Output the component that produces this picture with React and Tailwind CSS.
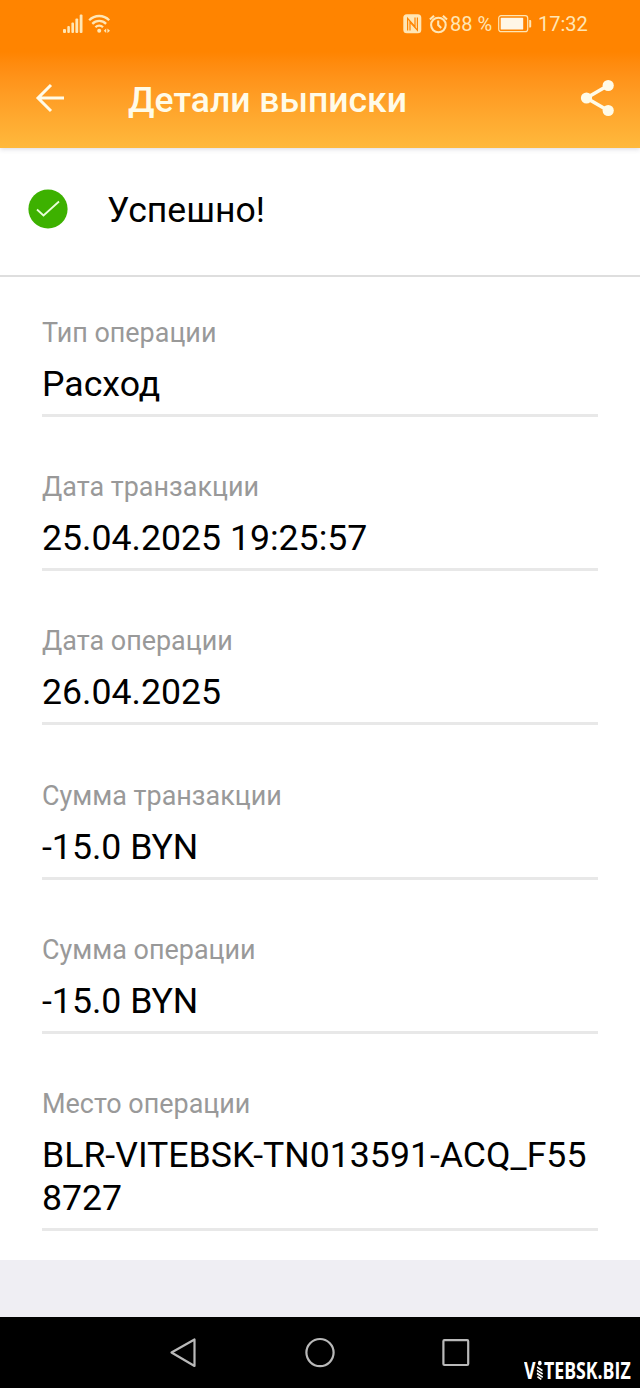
const fields = [
  { label: 'Тип операции', value: 'Расход' },
  { label: 'Дата транзакции', value: '25.04.2025 19:25:57' },
  { label: 'Дата операции', value: '26.04.2025' },
  { label: 'Сумма транзакции', value: '-15.0 BYN' },
  { label: 'Сумма операции', value: '-15.0 BYN' },
  { label: 'Место операции', value: 'BLR-VITEBSK-TN013591-ACQ_F558727' },
];

const SignalIcon = () => (
  <svg width="20" height="20" viewBox="0 0 20 20" fill="currentColor">
    <rect x="0" y="15" width="3" height="4" rx="1" />
    <rect x="4.3" y="12" width="2.6" height="7" rx="1" />
    <rect x="8.4" y="8.5" width="2.6" height="10.5" rx="1" />
    <rect x="12.4" y="4.5" width="2.8" height="14.5" rx="1" />
    <rect x="16.7" y="0.5" width="2.8" height="18.5" rx="1" />
  </svg>
);

const WifiIcon = () => (
  <svg width="24" height="20" viewBox="0 0 24 20" fill="none" stroke="currentColor" strokeWidth="2.3">
    <path d="M1.2 6.2a14 14 0 0 1 20 0" />
    <path d="M4.3 9.9a9.6 9.6 0 0 1 13.8 0" />
    <path d="M7.4 13.2a5.4 5.4 0 0 1 7.6 0" />
    <circle cx="11.2" cy="16.8" r="2" fill="currentColor" stroke="none" />
    <path d="M18.2 14.5v4.5l-2.4-2.2zM19.4 14.5v4.5l2.6-2.2z" fill="currentColor" stroke="none" />
  </svg>
);

const NfcIcon = () => (
  <svg width="19" height="20" viewBox="0 0 19 20">
    <rect x="0.3" y="0.3" width="18" height="19" rx="3.5" fill="currentColor" />
    <path d="M4.6 16.5V4.4l7.4 8.2V3.5" fill="none" stroke="#ff8400" strokeWidth="1.2" />
    <path d="M7 16.5V8.2l7.4 8V3.5" fill="none" stroke="#ff8400" strokeWidth="1.2" />
  </svg>
);

const AlarmIcon = () => (
  <svg width="19" height="20" viewBox="0 0 19 20" fill="none" stroke="currentColor" strokeWidth="2.1">
    <circle cx="9.4" cy="11" r="7.3" />
    <path d="M9.2 6.5V11l3 3" />
    <path d="M0.9 5.6L5 1.8M18 5.6l-4.1-3.8" />
  </svg>
);

const BatteryIcon = () => (
  <svg width="34" height="18" viewBox="0 0 34 18">
    <rect x="0.7" y="0.7" width="29" height="16" rx="2.5" fill="none" stroke="currentColor" strokeWidth="1.2" />
    <rect x="2.7" y="2.8" width="22.5" height="11.8" rx="0.7" fill="#fff6e6" />
    <path d="M31.2 5h1a1 1 0 0 1 1 1v5.6a1 1 0 0 1-1 1h-1z" fill="currentColor" />
  </svg>
);

const StatusBar = () => (
  <div className="flex h-12 items-center text-[#ffe6b5]">
    <div className="ml-[63px] flex gap-[5px]">
      <SignalIcon />
      <WifiIcon />
    </div>
    <div className="ml-auto mr-[52px] flex items-center">
      <NfcIcon />
      <div className="ml-[7px]"><AlarmIcon /></div>
      <span className="ml-[2px] w-[48px] whitespace-nowrap text-[20px] leading-6">88 %</span>
      <BatteryIcon />
      <span className="ml-[6px] w-[50px] text-[20px] leading-6">17:32</span>
    </div>
  </div>
);

const Header = () => (
  <header className="h-[148px] bg-linear-to-b from-[#ff8400] from-35% to-[#ffb93c] shadow-[0_1px_5px_rgba(60,60,90,0.2)]">
    <StatusBar />
    <div className="flex h-[100px] items-center">
      <svg className="ml-[35px]" width="30" height="30" viewBox="0 0 30 30" fill="none" stroke="#fffbe8" strokeWidth="3">
        <path d="M16 2L3 15l13 13M3 15h26" />
      </svg>
      <h1 className="ml-[63px] whitespace-nowrap pt-1 text-[35.5px] font-medium leading-[42px] text-[#fffbe8]">Детали выписки</h1>
      <svg className="ml-auto mr-[26px]" width="34" height="38" viewBox="0 0 34 38" fill="#fffbe8">
        <path d="M28 6.5L6.5 19l21.5 12.5" fill="none" stroke="#fffbe8" strokeWidth="3.6" />
        <circle cx="28.2" cy="6.5" r="5.6" />
        <circle cx="6.5" cy="19" r="5.6" />
        <circle cx="28.2" cy="31.5" r="5.6" />
      </svg>
    </div>
  </header>
);

const Field = ({ label, value }) => (
  <div className="border-b-[3px] border-[#e8e8e8] pb-2">
    <div className="text-[26.95px] leading-8 text-[#999999]">{label}</div>
    <div className="mt-[14px] break-all text-[35.65px] leading-[43px] text-black">{value}</div>
  </div>
);

const NavBar = () => (
  <nav className="relative h-[71px] bg-black">
    <div className="flex h-full items-center pl-[169px]">
      <svg width="28" height="32" viewBox="0 0 28 32" fill="none" stroke="#b9b9b9" strokeWidth="2.2" strokeLinejoin="round">
        <path d="M25.5 2.5v26.5L2.5 15.5z" />
      </svg>
      <svg className="ml-[107px]" width="32" height="32" viewBox="0 0 32 32" fill="none" stroke="#b9b9b9" strokeWidth="2.2">
        <circle cx="16" cy="15.6" r="13.6" />
      </svg>
      <svg className="ml-[105px]" width="30" height="30" viewBox="0 0 30 30" fill="none" stroke="#b9b9b9" strokeWidth="2.2">
        <rect x="2.4" y="2.2" width="24.8" height="24.8" rx="1" />
      </svg>
    </div>
    <div className="absolute right-[9px] top-[39px] flex h-7 w-[107px] items-center text-white">
      <div className="flex origin-left scale-x-[0.77] items-center whitespace-nowrap font-['Open_Sans',sans-serif] text-[23px] font-bold leading-7">
        <span>V</span>
        <svg className="mx-px" width="9" height="20" viewBox="0 0 9 20">
          <circle cx="4.5" cy="3.2" r="2.4" fill="white" />
          <path d="M1 7L8 10.6M0.7 10.2L8.3 14M0.7 13.4L8.3 17.2M1.5 16.8L6.5 19.3" stroke="white" strokeWidth="1.8" />
        </svg>
        <span>TEBSK.BIZ</span>
      </div>
    </div>
  </nav>
);

const App = () => (
  <div className="flex h-[1388px] w-[640px] flex-col overflow-hidden bg-white font-[Roboto,sans-serif]">
    <Header />
    <section className="flex h-[129px] items-center border-b-2 border-[#dedede] pb-[5px] pl-7">
      <svg width="40" height="40" viewBox="0 0 40 40">
        <circle cx="20" cy="20" r="19.6" fill="#3db100" />
        <path d="M9 20.5l6.5 6L31 12.5" fill="none" stroke="#e9ffd8" strokeWidth="1.8" />
      </svg>
      <span className="ml-[39px] pt-[3px] text-[35.6px] leading-[43px] text-black">Успешно!</span>
    </section>
    <main className="flex h-[983px] flex-col gap-[54.2px] px-[42px] pt-10">
      {fields.map((field) => (
        <Field key={field.label} label={field.label} value={field.value} />
      ))}
    </main>
    <div className="flex-1 bg-[#efeef3]" />
    <NavBar />
  </div>
);

export default App;
